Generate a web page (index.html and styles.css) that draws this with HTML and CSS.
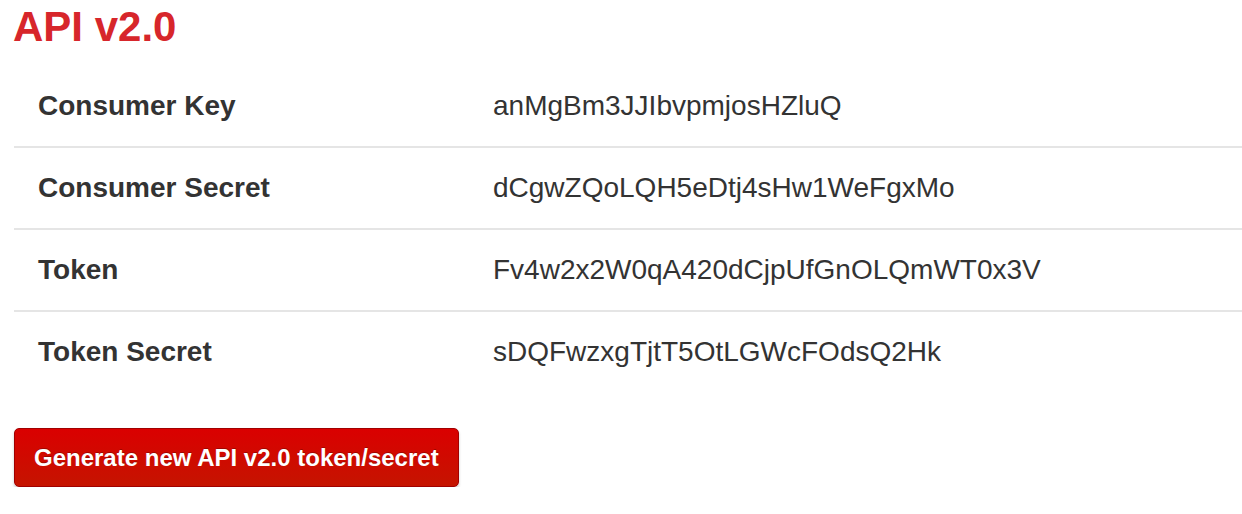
FILE: index.html
```html
<!DOCTYPE html>
<html>
<head>
<meta charset="utf-8">
<link rel="stylesheet" href="styles.css">
</head>
<body>
<div class="page">
  <h1 class="title">API v2.0</h1>
  <div class="keys">
    <div class="row"><div class="label">Consumer Key</div><div class="value">anMgBm3JJIbvpmjosHZluQ</div></div>
    <div class="row"><div class="label">Consumer Secret</div><div class="value">dCgwZQoLQH5eDtj4sHw1WeFgxMo</div></div>
    <div class="row"><div class="label">Token</div><div class="value">Fv4w2x2W0qA420dCjpUfGnOLQmWT0x3V</div></div>
    <div class="row"><div class="label">Token Secret</div><div class="value">sDQFwzxgTjtT5OtLGWcFOdsQ2Hk</div></div>
  </div>
  <button class="btn">Generate new API v2.0 token/secret</button>
</div>
</body>
</html>
```

FILE: styles.css
```css
html, body {
  margin: 0;
  padding: 0;
  background: #fff;
}
body {
  font-family: "Liberation Sans", Arial, sans-serif;
  color: #333;
}
.page {
  padding: 0 0 0 14px;
}
.title {
  margin: 6px 0 18px -1px;
  font-size: 42px;
  line-height: 42px;
  font-weight: bold;
  color: #d7262b;
}
.keys {
  display: flex;
  flex-direction: column;
}
.row {
  display: grid;
  grid-template-columns: 455px 1fr;
  border-top: 2px solid #e5e5e5;
}
.row:first-child {
  border-top: none;
}
.label, .value {
  padding: 20px 24px;
  font-size: 28px;
  line-height: 40px;
}
.label {
  font-weight: bold;
}
.btn {
  margin-top: 36px;
  display: block;
  font-family: "Liberation Sans", Arial, sans-serif;
  font-size: 24px;
  font-weight: bold;
  line-height: 33px;
  color: #fff;
  padding: 12px 19px;
  border: 1px solid #a10000;
  border-radius: 5px;
  background: linear-gradient(#da0000, #c51400);
  box-shadow: 0 2px 3px rgba(0,0,0,0.2);
  text-shadow: 0 -1px 0 rgba(0,0,0,0.25);
}
```
